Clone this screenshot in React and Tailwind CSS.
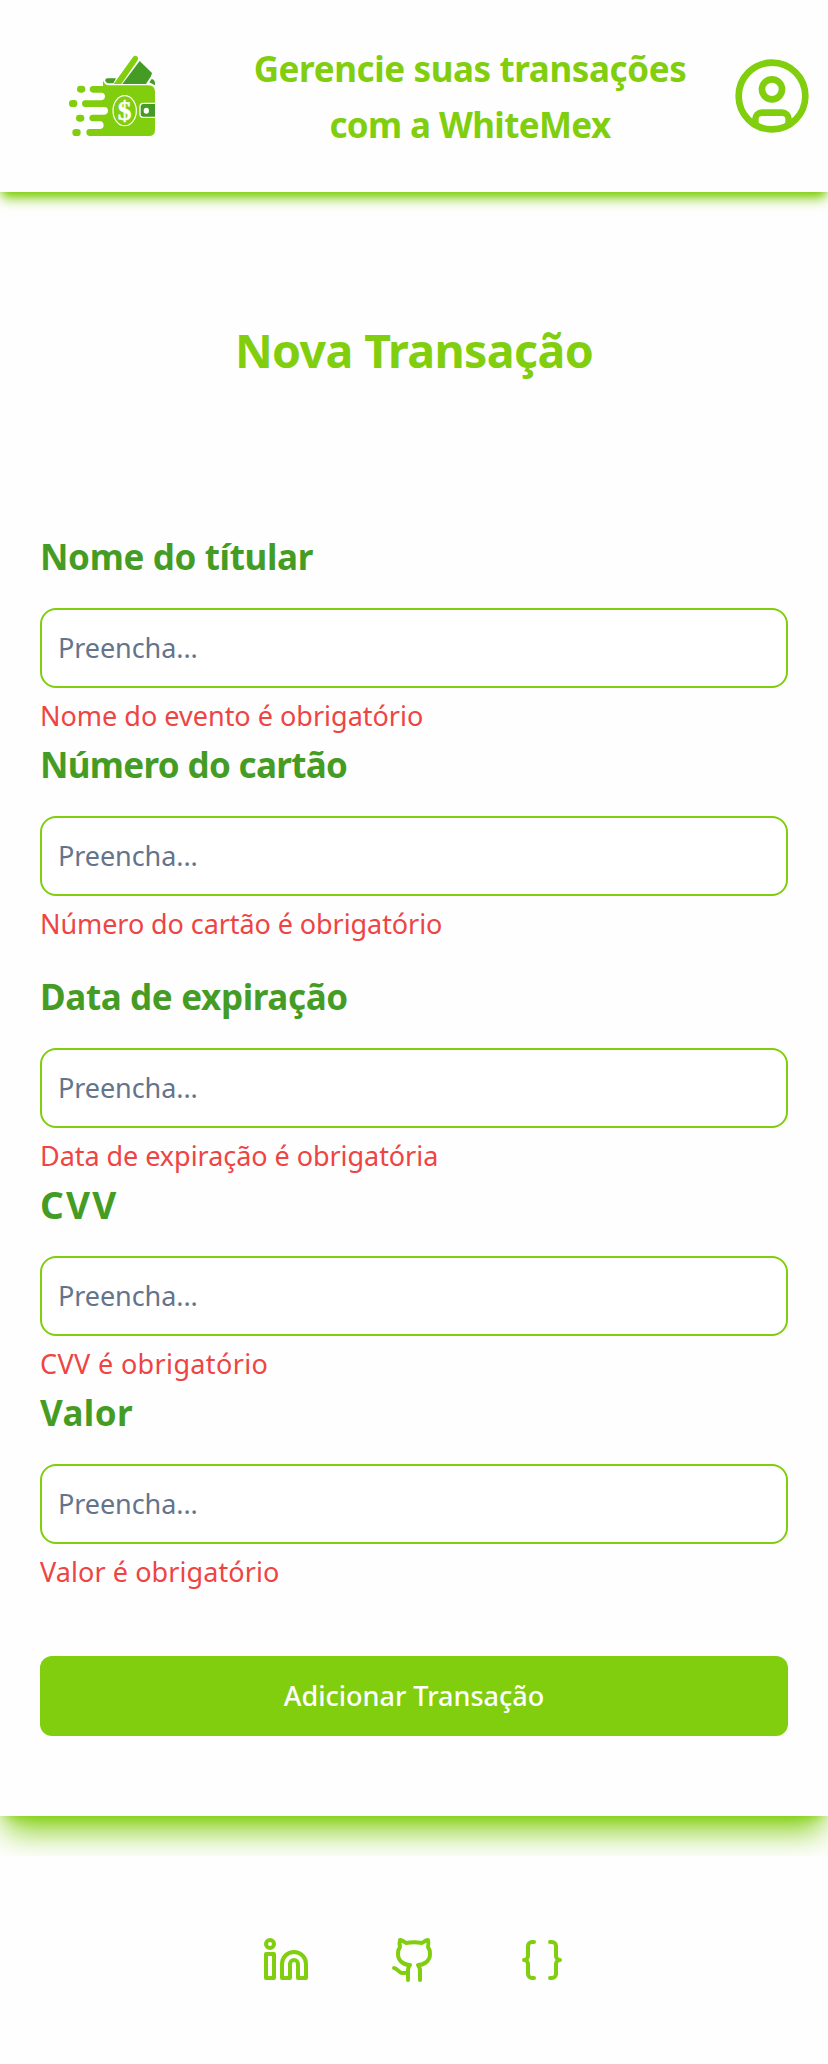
import React from "react";

const stroke = {
  fill: "none",
  stroke: "currentColor",
  strokeWidth: 2,
  strokeLinecap: "round",
  strokeLinejoin: "round",
  viewBox: "0 0 24 24",
};

function WalletLogo() {
  return (
    <svg className="h-[110px] w-48 shrink-0" viewBox="-102 3 576 330" aria-hidden="true">
      <path d="M172 115H198L190 130H174Q166 128 166 121Q166 115 172 115Z" fill="#459c25" />
      <path d="M298 127L305 117Q315 119 315 130V136Z" fill="#459c25" />
      <path d="M269 63L306 99Q305 104 302 110L288 132H217Z" fill="#459c25" />
      <path d="M191 132L249 51Q254 45 261 49Q267 54 262 62L214 132Z" fill="#80ce0e" />
      <path
        d="M159 121Q163 136 177 136H296Q315 137 315 156V269Q315 288 296 288H118Q109 287 109 277Q109 268 118 267H151Q161 265 161 255Q160 245 151 244H128Q118 243 118 234Q118 225 128 224H163Q174 222 174 212Q174 202 163 201H105Q96 200 96 191Q96 182 105 181H154Q165 179 165 169Q165 159 154 158H129Q119 157 119 148Q119 139 129 138H159Z"
        fill="#80ce0e"
      />
      <g fill="#80ce0e">
        <rect x="81" y="137" width="25" height="21" rx="10" />
        <rect x="57" y="180" width="25" height="21" rx="10" />
        <rect x="78" y="224" width="25" height="21" rx="10" />
        <rect x="67" y="267" width="25" height="21" rx="10" />
      </g>
      <path d="M315 190H280Q270 190 270 200V223Q270 232 280 232H315" fill="#459c25" stroke="#fff" strokeWidth="4" />
      <ellipse cx="289" cy="212" rx="8" ry="9" fill="#fff" />
      <ellipse cx="224" cy="212" rx="35" ry="45" fill="none" stroke="#fff" strokeWidth="3.5" />
      <text
        x="224"
        y="240"
        textAnchor="middle"
        fill="#fff"
        stroke="#fff"
        strokeWidth="1.5"
        className="font-['Liberation_Serif',serif] text-[82px] font-bold"
      >
        $
      </text>
    </svg>
  );
}

function UserIcon() {
  return (
    <svg {...stroke} className="size-20 shrink-0">
      <circle cx="12" cy="12" r="10" />
      <circle cx="12" cy="10" r="3" />
      <path d="M7 20.662V19a2 2 0 0 1 2-2h6a2 2 0 0 1 2 2v1.662" />
    </svg>
  );
}

function LinkedinIcon() {
  return (
    <svg {...stroke} className="size-12">
      <path d="M16 8a6 6 0 0 1 6 6v7h-4v-7a2 2 0 0 0-2-2 2 2 0 0 0-2 2v7h-4v-7a6 6 0 0 1 6-6z" />
      <rect width="4" height="12" x="2" y="9" />
      <circle cx="4" cy="4" r="2" />
    </svg>
  );
}

function GithubIcon() {
  return (
    <svg {...stroke} className="size-12">
      <path d="M15 22v-4a4.8 4.8 0 0 0-1-3.5c3 0 6-2 6-5.5.08-1.25-.27-2.48-1-3.5.28-1.15.28-2.35 0-3.5 0 0-1 0-3 1.5-2.64-.5-5.36-.5-8 0C6 2 5 2 5 2c-.3 1.15-.3 2.35 0 3.5A5.403 5.403 0 0 0 4 9c0 3.5 3 5.5 6 5.5-.39.49-.68 1.05-.85 1.65-.17.6-.22 1.23-.15 1.85v4" />
      <path d="M9 18c-4.51 2-5-2-7-2" />
    </svg>
  );
}

function BracesIcon() {
  return (
    <svg {...stroke} className="size-12">
      <path d="M8 3H7a2 2 0 0 0-2 2v5a2 2 0 0 1-2 2 2 2 0 0 1 2 2v5c0 1.1.9 2 2 2h1" />
      <path d="M16 21h1a2 2 0 0 0 2-2v-5c0-1.1.9-2 2-2a2 2 0 0 1-2-2V5a2 2 0 0 0-2-2h-1" />
    </svg>
  );
}

function Field({ label, error, labelClass = "text-[35px] tracking-[-0.35px]", errorClass = "" }) {
  return (
    <div className="flex flex-col">
      <label className={`mb-[23px] pt-px leading-[56px] font-bold text-[#459c25] ${labelClass}`}>{label}</label>
      <input
        placeholder="Preencha..."
        className="h-20 w-full rounded-2xl border-2 border-[#80ce0e] bg-white px-4 pb-0.5 text-[27px] tracking-[-0.08px] placeholder:text-[#64748b] placeholder:opacity-100"
      />
      <span className={`mt-2 text-[27px] leading-10 text-[#ef4444] ${errorClass}`}>{error}</span>
    </div>
  );
}

export default function App() {
  return (
    <div className="min-h-[2064px] w-full bg-[#fefefe] font-['Noto_Sans',sans-serif]">
      <header className="relative z-10 flex h-48 items-center justify-between bg-[#fefefe] px-4 text-[#80ce0e] shadow-[0_8px_12px_-2px_#80ce0e,0_4px_8px_-4px_#80ce0e]">
        <WalletLogo />
        <h1 className="pt-px text-center text-[35px] leading-[56px] font-bold tracking-[-0.39px]">
          Gerencie suas transações
          <br />
          <span className="tracking-[-0.62px]">com a WhiteMex</span>
        </h1>
        <UserIcon />
      </header>

      <div className="overflow-hidden pb-10">
        <main className="flex flex-col bg-[#fefefe] px-10 pt-[126px] pb-20 shadow-[0_20px_30px_-6px_#80ce0e,0_8px_12px_-8px_#80ce0e]">
          <h2 className="mb-[146px] text-center text-[46.5px] leading-[64px] font-bold tracking-[-0.63px] text-[#80ce0e]">
            Nova Transação
          </h2>
          <form className="flex flex-col">
            <div className="mb-6 flex flex-col">
              <Field label="Nome do títular" error="Nome do evento é obrigatório" />
              <Field
                label="Número do cartão"
                error="Número do cartão é obrigatório"
                labelClass="text-[35px] tracking-[-0.67px]"
                errorClass="tracking-[-0.08px]"
              />
            </div>
            <Field
              label="Data de expiração"
              error="Data de expiração é obrigatória"
              errorClass="tracking-[-0.05px]"
            />
            <Field
              label="CVV"
              error="CVV é obrigatório"
              labelClass="text-[37px] tracking-[2.2px]"
              errorClass="tracking-[0.36px]"
            />
            <Field
              label="Valor"
              error="Valor é obrigatório"
              labelClass="text-[35px] tracking-[0.4px]"
              errorClass="tracking-[0.08px]"
            />
            <button
              type="button"
              className="mt-16 h-20 w-full rounded-xl bg-[#80ce0e] text-[27px] font-medium text-white"
            >
              Adicionar Transação
            </button>
          </form>
        </main>
      </div>

      <footer className="flex items-center justify-center gap-20 pt-20 pb-20 text-[#80ce0e]">
        <LinkedinIcon />
        <GithubIcon />
        <BracesIcon />
      </footer>
    </div>
  );
}
